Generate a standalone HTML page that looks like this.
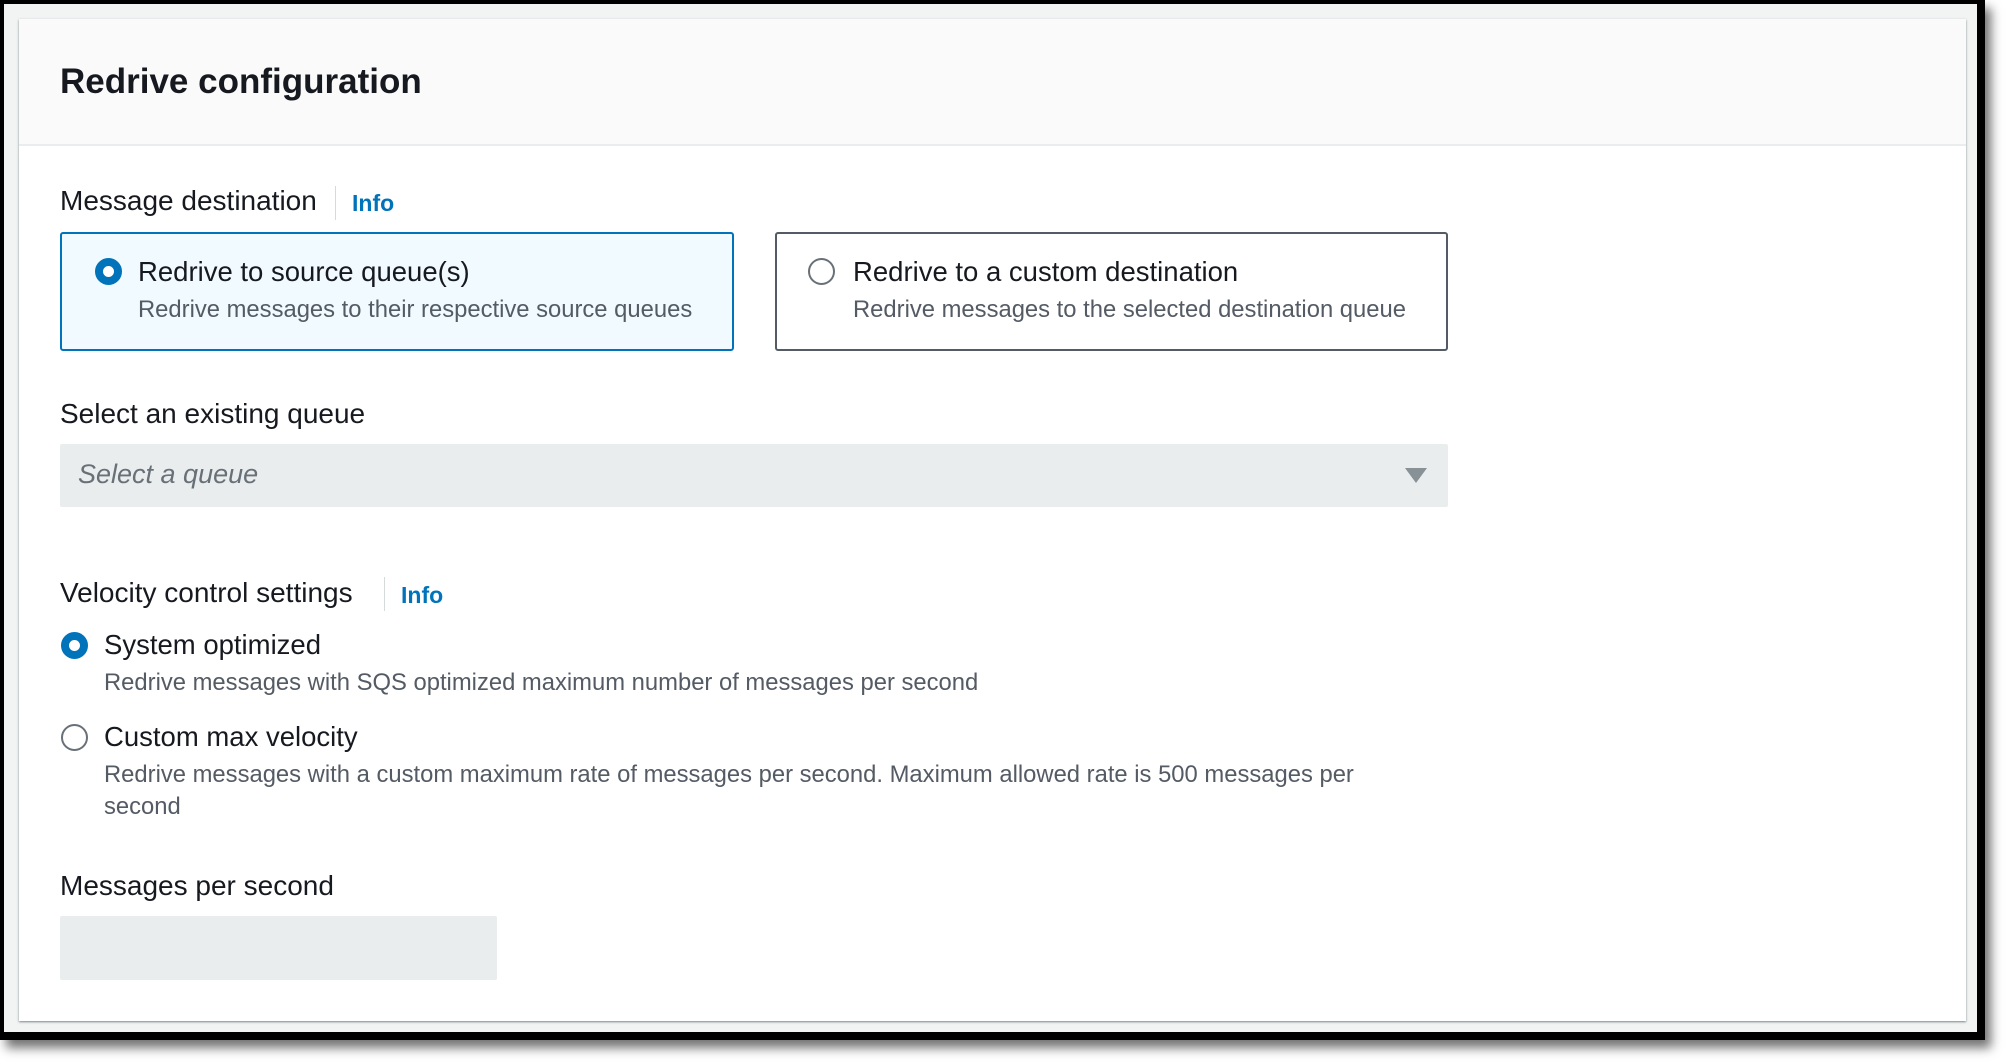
<!DOCTYPE html>
<html><head><meta charset="utf-8"><style>
*{margin:0;padding:0;box-sizing:border-box}
body{width:2008px;height:1062px;background:#fff;position:relative;overflow:hidden;font-family:"Liberation Sans",sans-serif;color:#16191f}
.frame{position:absolute;left:0;top:0;width:1985px;height:1040px;background:#f2f3f3;border:4px solid #000;border-right-width:8px;border-bottom-width:8px;box-shadow:6px 8px 10px rgba(0,0,0,.55)}
.card{position:absolute;left:19px;top:19px;width:1947px;height:1002px;background:#fff;box-shadow:0 1px 2px rgba(0,28,36,.5)}
.hdr{position:absolute;left:0;top:0;width:100%;height:127px;background:#fafafa;border-bottom:2px solid #eaeded}
.a{position:absolute;white-space:nowrap}
.t{font-size:35px;font-weight:bold;left:41px;top:43px}
.lbl{font-size:28px}
.info{font-size:23px;font-weight:bold;color:#0073bb}
.sep{position:absolute;width:1px;background:#d5dbdb;height:34px}
.tile{position:absolute;border-radius:3px}
.rt{font-size:27.5px}
.ds{font-size:23.8px;color:#545b64}
.rad{position:absolute;width:27px;height:27px;border-radius:50%}
.on{border:8px solid #0073bb;background:#fff}
.off{border:2px solid #687078;background:#fff}
</style></head><body>
<div class="frame"></div>
<div class="card">
<div class="hdr"></div>
<div class="a t">Redrive configuration</div>
<div class="a lbl" style="left:41px;top:166px">Message destination</div>
<div class="sep" style="left:316px;top:167px"></div>
<div class="a info" style="left:333px;top:171px">Info</div>
<div class="tile" style="left:41px;top:213px;width:674px;height:119px;border:2px solid #0073bb;background:#f1faff"></div>
<div class="rad on" style="left:76px;top:239px"></div>
<div class="a rt" style="left:119px;top:237px">Redrive to source queue(s)</div>
<div class="a ds" style="left:119px;top:277px">Redrive messages to their respective source queues</div>
<div class="tile" style="left:756px;top:213px;width:673px;height:119px;border:2px solid #545b64"></div>
<div class="rad off" style="left:789px;top:239px"></div>
<div class="a rt" style="left:834px;top:237px">Redrive to a custom destination</div>
<div class="a ds" style="left:834px;top:277px">Redrive messages to the selected destination queue</div>
<div class="a lbl" style="left:41px;top:379px">Select an existing queue</div>
<div class="tile" style="left:41px;top:425px;width:1388px;height:63px;background:#eaeded;border-radius:2px"></div>
<div class="a" style="left:59px;top:440px;font-size:27px;font-style:italic;color:#687078">Select a queue</div>
<svg class="a" style="left:1386px;top:449px" width="22" height="16"><path d="M0 0H22L11 15Z" fill="#879196"/></svg>
<div class="a lbl" style="left:41px;top:558px">Velocity control settings</div>
<div class="sep" style="left:365px;top:558px"></div>
<div class="a info" style="left:382px;top:563px">Info</div>
<div class="rad on" style="left:42px;top:613px"></div>
<div class="a rt" style="left:85px;top:610px">System optimized</div>
<div class="a ds" style="left:85px;top:650px">Redrive messages with SQS optimized maximum number of messages per second</div>
<div class="rad off" style="left:42px;top:705px"></div>
<div class="a rt" style="left:85px;top:702px">Custom max velocity</div>
<div class="a ds" style="left:85px;top:742px">Redrive messages with a custom maximum rate of messages per second. Maximum allowed rate is 500 messages per</div>
<div class="a ds" style="left:85px;top:774px">second</div>
<div class="a lbl" style="left:41px;top:851px">Messages per second</div>
<div class="tile" style="left:41px;top:897px;width:437px;height:64px;background:#eaeded;border-radius:2px"></div>
</div>
</body></html>
